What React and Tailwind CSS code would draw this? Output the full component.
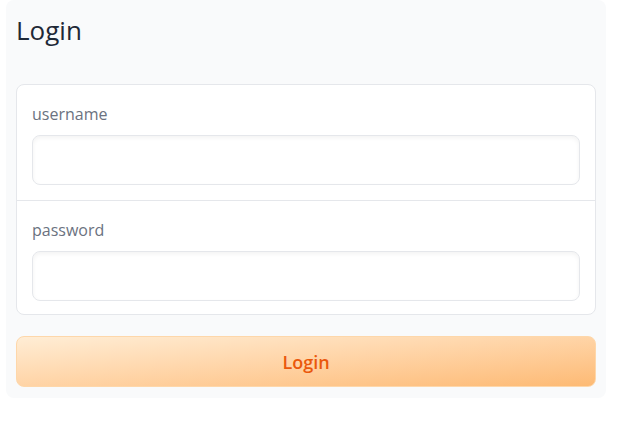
import React, { useState } from "react";

export default function App() {
  const [form, setForm] = useState({ username: "", password: "" });

  const handleChange = (e) => {
    setForm({ ...form, [e.target.name]: e.target.value });
  };

  return (
    <div className="w-[622px] h-[424px] bg-white font-['Open_Sans',sans-serif]">
      <div className="ml-[6px] w-[600px] h-[398px] bg-[#f9fafb] rounded-lg px-[10px]">
        {/* Header */}
        <h1 className="pt-[12px] h-[84px] text-[26px] leading-[36px] text-[#1f2937]">
          Login
        </h1>

        {/* Fields */}
        <div className="bg-white border border-[#e5e7eb] rounded-lg flex flex-col">
          {[
            { name: "username", type: "text", pb: "pb-[15px]" },
            { name: "password", type: "password", pb: "pb-[13px]" },
          ].map((field, idx) => (
            <div
              key={field.name}
              className={`px-[15px] pt-[17px] ${field.pb} ${
                idx > 0 ? "border-t border-[#e5e7eb]" : ""
              }`}
            >
              <label className="block h-6 mb-[9px] text-base leading-6 text-[#6b7280]">
                {field.name}
              </label>
              <input
                type={field.type}
                name={field.name}
                value={form[field.name]}
                onChange={handleChange}
                className="block w-full h-[50px] px-3 bg-white border border-[#e5e7eb] rounded-lg shadow-[inset_0_2px_4px_rgba(0,0,0,0.05)] outline-none"
              />
            </div>
          ))}
        </div>

        <button className="mt-[21px] w-full h-[51px] rounded-lg border border-[#fed7aa] bg-gradient-to-br from-[#ffedd5] to-[#fdba74] text-[#ea580c] text-lg font-semibold">
          Login
        </button>
      </div>
    </div>
  );
}
